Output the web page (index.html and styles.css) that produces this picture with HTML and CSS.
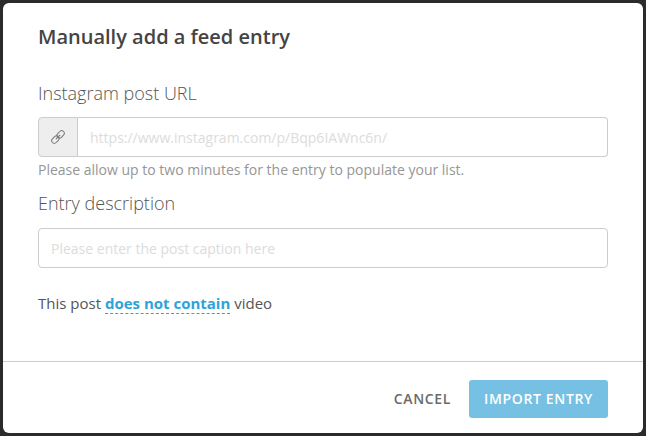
FILE: index.html
```html
<!DOCTYPE html>
<html lang="en">
<head>
<meta charset="utf-8">
<title>Manually add a feed entry</title>
<link rel="stylesheet" href="styles.css">
</head>
<body>
<div class="overlay">
  <div class="modal">
    <div class="modal-body">
      <h1 class="title">Manually add a feed entry</h1>
      <label class="label label-url">Instagram post URL</label>
      <div class="input-group">
        <span class="addon">
          <svg class="link-icon" viewBox="0 0 16 16" width="16" height="16" fill="none" stroke="#777" stroke-width="1" aria-hidden="true">
            <g transform="rotate(-45 8 8)">
              <rect x="0.2" y="5.4" width="8.2" height="5.2" rx="2.6"/>
              <rect x="7.6" y="5.4" width="8.2" height="5.2" rx="2.6"/>
              <path d="M5 8h6"/>
            </g>
          </svg>
        </span>
        <input class="field field-url" type="text" placeholder="https://www.instagram.com/p/Bqp6IAWnc6n/">
      </div>
      <p class="help">Please allow up to two minutes for the entry to populate your list.</p>
      <label class="label label-desc">Entry description</label>
      <input class="field field-desc" type="text" placeholder="Please enter the post caption here">
      <p class="toggle-line">This post <a class="toggle">does not contain</a> video</p>
    </div>
    <div class="modal-footer">
      <button class="btn btn-cancel" type="button">CANCEL</button>
      <button class="btn btn-import" type="button">IMPORT ENTRY</button>
    </div>
  </div>
</div>
</body>
</html>
```
FILE: styles.css
```css
* { box-sizing: border-box; }
html, body { margin: 0; height: 100%; }
body {
  background: #2b2b2b;
  font-family: "Open Sans", "Liberation Sans", sans-serif;
  overflow: hidden;
}
.overlay { padding: 3px; height: 436px; }
.modal {
  background: #fff;
  border-radius: 6px;
  height: 430px;
  display: flex;
  flex-direction: column;
}
.modal-body {
  flex: 1;
  padding: 20px 35px 0;
  display: flex;
  flex-direction: column;
}
.title {
  margin: 0;
  font-size: 20px;
  line-height: 27px;
  font-weight: 600;
  color: #444;
}
.label {
  display: block;
  font-size: 18px;
  line-height: 24px;
  font-weight: 300;
  color: #555;
}
.label-url { margin-top: 31px; }
.label-desc { margin-top: 12px; }
.input-group {
  display: flex;
  height: 40px;
  margin-top: 12px;
}
.addon {
  width: 40px;
  flex: none;
  display: flex;
  align-items: center;
  justify-content: center;
  background: #eee;
  border: 1px solid #ccc;
  border-radius: 4px 0 0 4px;
}
.field {
  height: 40px;
  border: 1px solid #ccc;
  border-radius: 4px;
  padding: 0 12px;
  font: 400 14px "Open Sans", "Liberation Sans", sans-serif;
  color: #444;
  background: #fff;
  outline: none;
}
.field::placeholder { color: #dcdcdc; opacity: 1; }
.field-url {
  flex: 1;
  min-width: 0;
  border-left: 0;
  border-radius: 0 4px 4px 0;
}
.field-desc { width: 100%; margin-top: 13px; flex: none; }
.help {
  margin: 3px 0 0;
  font-size: 14px;
  line-height: 19px;
  color: #969696;
}
.toggle-line {
  margin: 25px 0 0;
  font-size: 15px;
  line-height: 20px;
  color: #555;
}
.toggle {
  font-weight: 700;
  color: #2ea3d9;
  border-bottom: 1px dashed #2ea3d9;
}
.modal-footer {
  flex: none;
  height: 72px;
  border-top: 1px solid #ccc;
  padding: 18px 35px 0 0;
  display: flex;
  justify-content: flex-end;
  align-items: flex-start;
  gap: 18px;
}
.btn {
  height: 38px;
  border: 0;
  border-radius: 3px;
  font: 600 14px "Open Sans", "Liberation Sans", sans-serif;
  letter-spacing: 0.65px;
  padding: 0 15px 2px;
  background: transparent;
}
.btn-cancel { color: #6a6a6a; padding: 0 0 2px; }
.btn-import { background: #76c0e3; color: #fff; }
```
